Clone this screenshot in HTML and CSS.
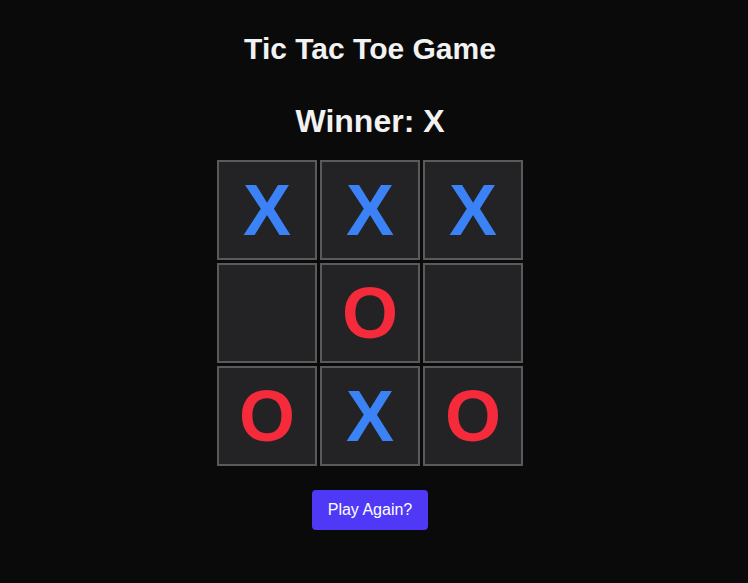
FILE: index.html
```html
<!DOCTYPE html>
<html lang="en">
<head>
<meta charset="utf-8">
<title>Tic Tac Toe Game</title>
<link rel="stylesheet" href="styles.css">
</head>
<body>
<main class="app">
  <h1 class="title">Tic Tac Toe Game</h1>
  <h2 class="status">Winner: X</h2>
  <div class="board">
    <div class="cell x">X</div>
    <div class="cell x">X</div>
    <div class="cell x">X</div>
    <div class="cell"></div>
    <div class="cell o">O</div>
    <div class="cell"></div>
    <div class="cell o">O</div>
    <div class="cell x">X</div>
    <div class="cell o">O</div>
  </div>
  <button class="reset">Play Again?</button>
</main>
</body>
</html>
```
FILE: styles.css
```css
html, body {
  margin: 0;
  padding: 0;
  background: #0a0a0a;
}
body {
  font-family: "Liberation Sans", Arial, sans-serif;
  color: #f2f2f2;
}
.app {
  display: flex;
  flex-direction: column;
  align-items: center;
  padding: 32px 8px 0 0;
}
.title {
  margin: 0;
  font-size: 30px;
  line-height: 34px;
  font-weight: 700;
}
.status {
  margin: 37px 0 0;
  font-size: 32px;
  line-height: 37px;
  font-weight: 700;
}
.board {
  margin-top: 20px;
  display: grid;
  grid-template-columns: repeat(3, 100px);
  grid-template-rows: repeat(3, 100px);
  gap: 3px;
}
.cell {
  box-sizing: border-box;
  border: 2px solid #5a5a5a;
  background: #232325;
  display: flex;
  align-items: center;
  justify-content: center;
  font-size: 72px;
  font-weight: 700;
  line-height: 1;
}
.x { color: #3b82f6; }
.o { color: #f52a3a; }
.reset {
  margin-top: 24px;
  width: 116px;
  height: 40px;
  border: none;
  border-radius: 4px;
  background: #4f39f6;
  color: #ffffff;
  font-family: "Liberation Sans", Arial, sans-serif;
  font-size: 16px;
  cursor: pointer;
}
```
